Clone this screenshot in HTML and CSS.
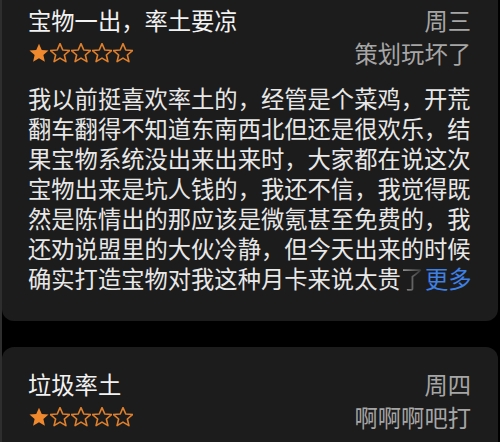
FILE: index.html
```html
<!DOCTYPE html>
<html lang="zh">
<head>
<meta charset="utf-8">
<link rel="stylesheet" href="styles.css">
</head>
<body>
<div class="page">
  <section class="card card-first">
    <div class="head">
      <div class="title">宝物一出，率土要凉</div>
      <div class="day">周三</div>
      <div class="stars">
        <svg class="star" viewBox="1.5 1.5 21 21"><path class="full" d="M12 2.2l2.9 6.6 7.1.6-5.4 4.7 1.6 7-6.2-3.7-6.2 3.7 1.6-7L2 9.4l7.1-.6z"/></svg>
        <svg class="star" viewBox="1.5 1.5 21 21"><path class="empty" d="M12 2.2l2.9 6.6 7.1.6-5.4 4.7 1.6 7-6.2-3.7-6.2 3.7 1.6-7L2 9.4l7.1-.6z"/></svg>
        <svg class="star" viewBox="1.5 1.5 21 21"><path class="empty" d="M12 2.2l2.9 6.6 7.1.6-5.4 4.7 1.6 7-6.2-3.7-6.2 3.7 1.6-7L2 9.4l7.1-.6z"/></svg>
        <svg class="star" viewBox="1.5 1.5 21 21"><path class="empty" d="M12 2.2l2.9 6.6 7.1.6-5.4 4.7 1.6 7-6.2-3.7-6.2 3.7 1.6-7L2 9.4l7.1-.6z"/></svg>
        <svg class="star" viewBox="1.5 1.5 21 21"><path class="empty" d="M12 2.2l2.9 6.6 7.1.6-5.4 4.7 1.6 7-6.2-3.7-6.2 3.7 1.6-7L2 9.4l7.1-.6z"/></svg>
      </div>
      <div class="tag">策划玩坏了</div>
    </div>
    <p class="body">我以前挺喜欢率土的，经管是个菜鸡，开荒翻车翻得不知道东南西北但还是很欢乐，结果宝物系统没出来出来时，大家都在说这次宝物出来是坑人钱的，我还不信，我觉得既然是陈情出的那应该是微氪甚至免费的，我还劝说盟里的大伙冷静，但今天出来的时候确实打造宝物对我这种月卡来说太贵<span class="fade">了</span><span class="more">更多</span></p>
  </section>
  <section class="card">
    <div class="head">
      <div class="title">垃圾率土</div>
      <div class="day">周四</div>
      <div class="stars">
        <svg class="star" viewBox="1.5 1.5 21 21"><path class="full" d="M12 2.2l2.9 6.6 7.1.6-5.4 4.7 1.6 7-6.2-3.7-6.2 3.7 1.6-7L2 9.4l7.1-.6z"/></svg>
        <svg class="star" viewBox="1.5 1.5 21 21"><path class="empty" d="M12 2.2l2.9 6.6 7.1.6-5.4 4.7 1.6 7-6.2-3.7-6.2 3.7 1.6-7L2 9.4l7.1-.6z"/></svg>
        <svg class="star" viewBox="1.5 1.5 21 21"><path class="empty" d="M12 2.2l2.9 6.6 7.1.6-5.4 4.7 1.6 7-6.2-3.7-6.2 3.7 1.6-7L2 9.4l7.1-.6z"/></svg>
        <svg class="star" viewBox="1.5 1.5 21 21"><path class="empty" d="M12 2.2l2.9 6.6 7.1.6-5.4 4.7 1.6 7-6.2-3.7-6.2 3.7 1.6-7L2 9.4l7.1-.6z"/></svg>
        <svg class="star" viewBox="1.5 1.5 21 21"><path class="empty" d="M12 2.2l2.9 6.6 7.1.6-5.4 4.7 1.6 7-6.2-3.7-6.2 3.7 1.6-7L2 9.4l7.1-.6z"/></svg>
      </div>
      <div class="tag">啊啊啊吧打</div>
    </div>
  </section>
</div>
</body>
</html>
```
FILE: styles.css
```css
html, body {
  margin: 0;
  padding: 0;
  background: #000;
  height: 100%;
  overflow: hidden;
}

.page {
  width: 500px;
  height: 442px;
  box-sizing: border-box;
  border-left: 2px solid #2e2e2e;
  padding-right: 2px;
  display: flex;
  flex-direction: column;
  gap: 26px;
  font-family: "Noto Sans CJK SC", "Noto Sans", sans-serif;
  font-size: 23.3px;
}

.card {
  background: #1c1c1c;
  border-radius: 12px;
  padding: 22px 27px 28px 26px;
  flex-shrink: 0;
}

.card-first {
  margin-top: -17px;
  border-radius: 0 0 12px 12px;
}

.head {
  display: grid;
  grid-template-columns: 1fr auto;
  grid-template-rows: 30px 30px;
  row-gap: 3px;
  align-items: center;
}

.title {
  color: #f2f2f2;
  line-height: 30px;
}

.day,
.tag {
  color: #a6a6a6;
  line-height: 30px;
  text-align: right;
}

.stars {
  display: flex;
  gap: 1px;
  align-items: center;
  padding-left: 1px;
}

.star {
  width: 20px;
  height: 20px;
  display: block;
}

.star .full {
  fill: #f0882e;
}

.star .empty {
  fill: none;
  stroke: #e0802c;
  stroke-width: 1.7;
  stroke-linejoin: round;
}

.body {
  margin: 15px 0 0 0;
  width: calc(19em + 4px);
  color: #e8e8e8;
  line-height: 30px;
}

.fade {
  background: linear-gradient(to right, #9a9a9a, #2a2a2a);
  -webkit-background-clip: text;
  background-clip: text;
  color: transparent;
}

.more {
  color: #3f80e4;
  margin-left: 1px;
}
```
